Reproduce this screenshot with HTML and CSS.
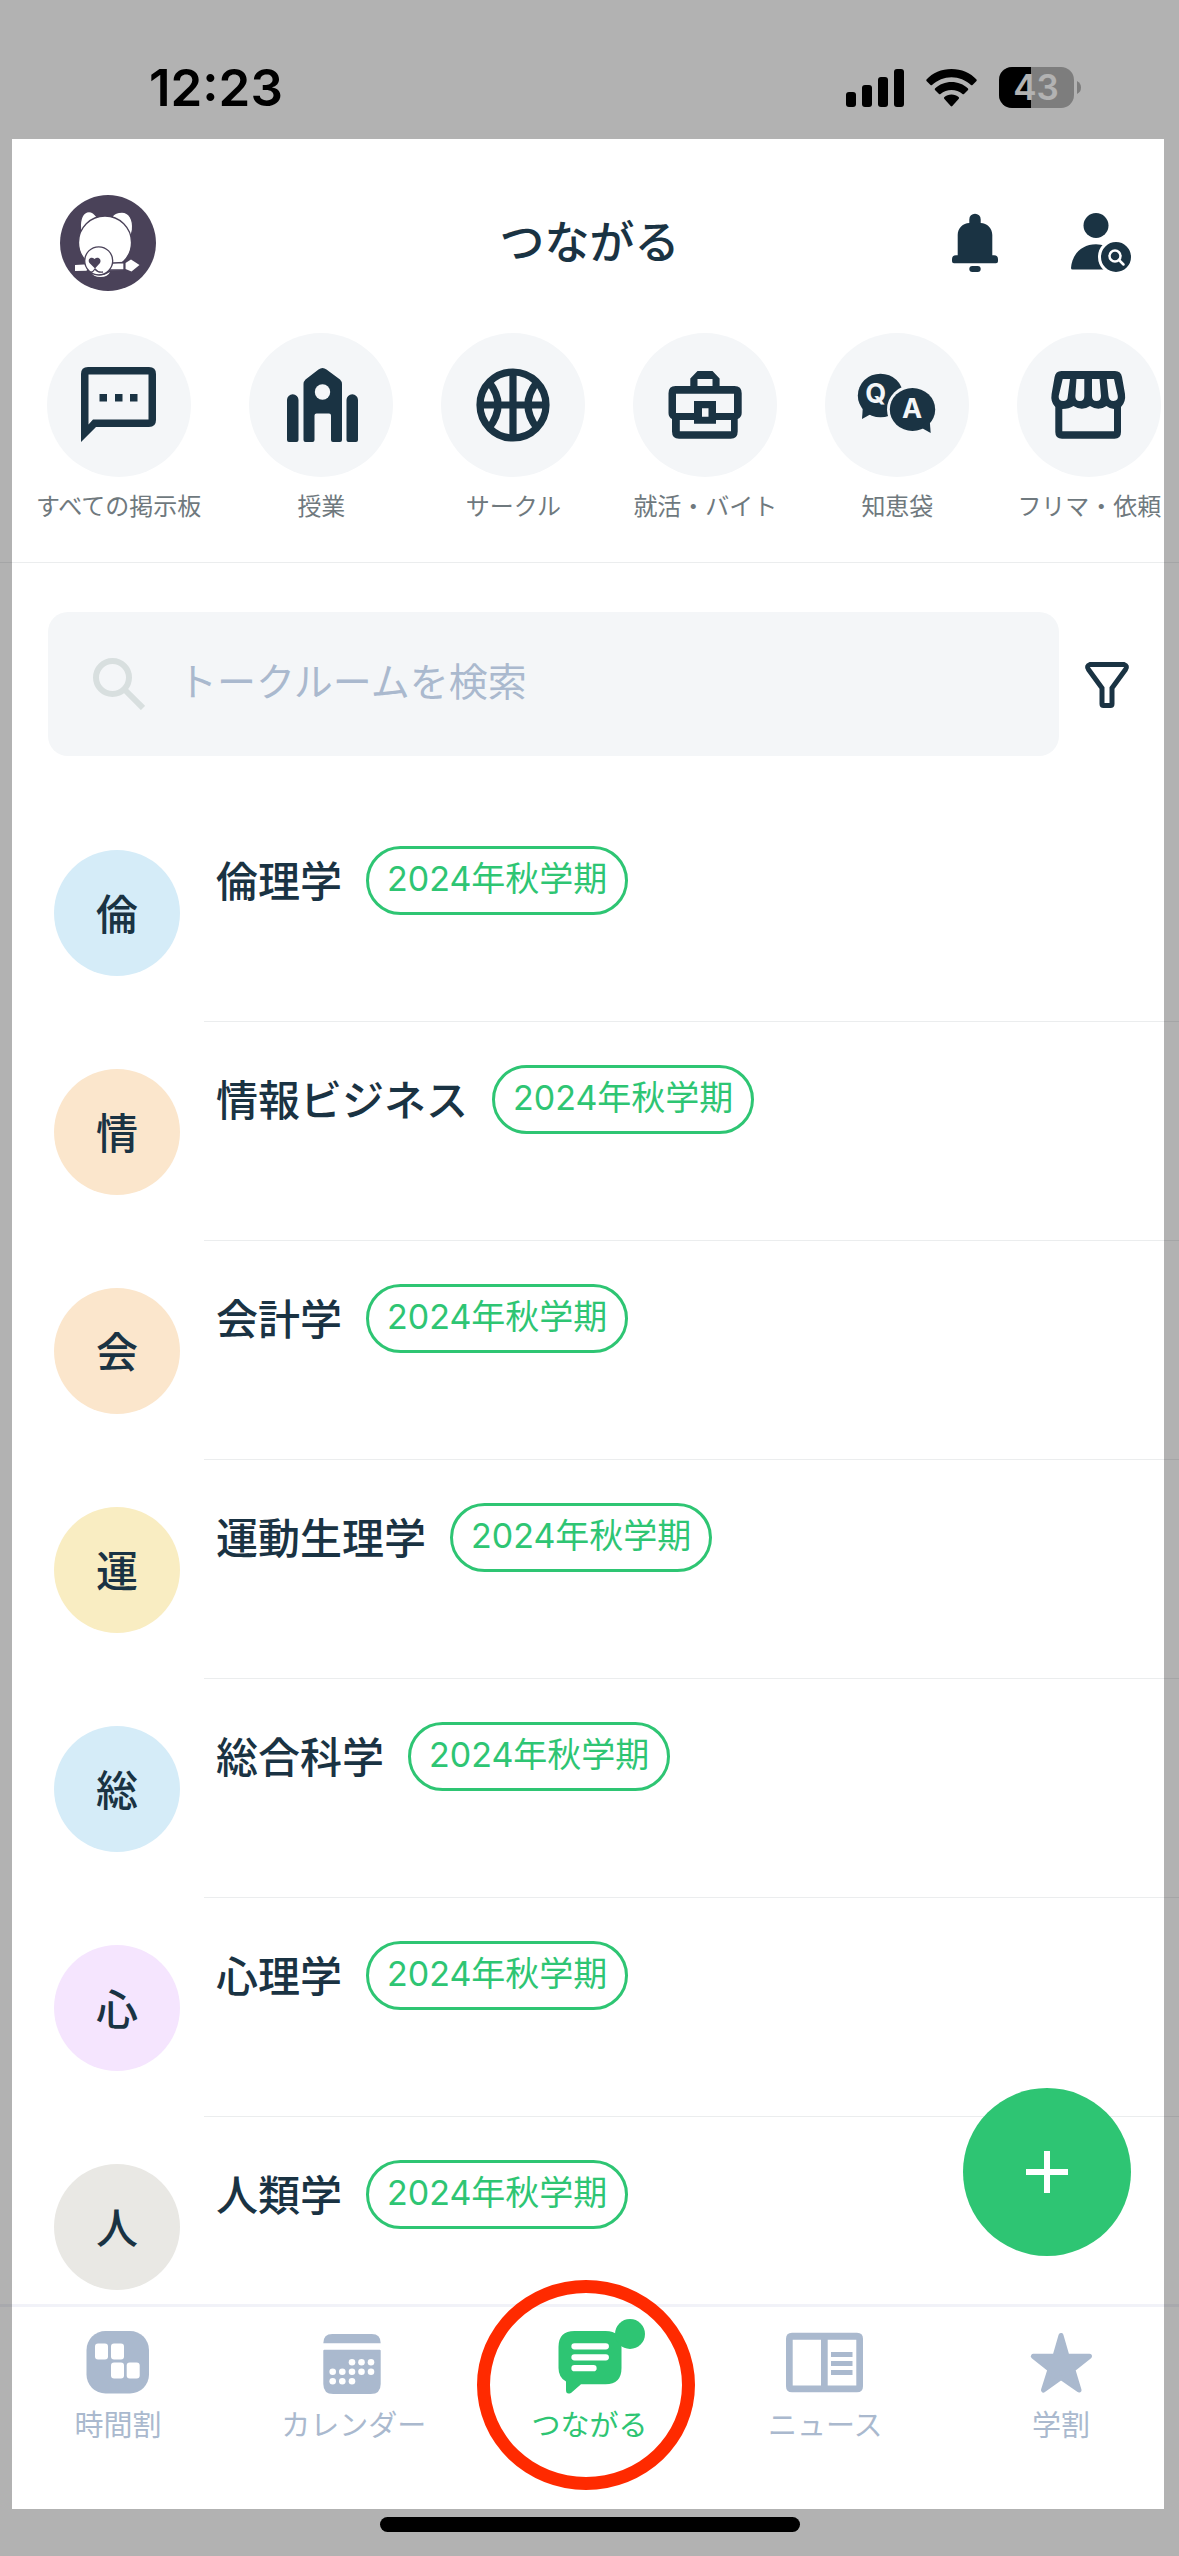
FILE: index.html
```html
<!DOCTYPE html>
<html lang="ja">
  <head>
    <meta charset="utf-8">
    <meta name="viewport" content="width=device-width, initial-scale=1">
    <title>つながる</title>
    <link rel="stylesheet" href="styles.css">
  </head>
  <body>
    <div class="app">
      <div class="status">
        <span class="time">12:23</span>
        <div class="status-icons">
          <svg width="58" height="38" viewBox="0 0 58 38">
            <rect x="0" y="23" width="10" height="15" rx="3"/>
            <rect x="16" y="16" width="10" height="22" rx="3"/>
            <rect x="32" y="8" width="10" height="30" rx="3"/>
            <rect x="48" y="0" width="10" height="38" rx="3"/>
          </svg>
          <svg width="51" height="38" viewBox="0 0 51 38">
            <path d="M25.500 0C35.500 0 44.500 4 50.500 10.500Q51 11.200 50.500 12L46.500 16Q45.700 16.500 45 16C39.500 11 33 8.200 25.500 8.200S11.500 11 6 16Q5.300 16.500 4.500 16L.5 12Q0 11.200.5 10.500C6.500 4 15.500 0 25.500 0z"/>
            <path d="M25.500 13C31.700 13 37.500 15.300 42 19.500Q42.600 20.200 42 21L38 25Q37.200 25.500 36.500 25C33.500 22.500 29.500 21 25.500 21S17.500 22.500 14.500 25Q13.800 25.500 13 25L9 21Q8.400 20.200 9 19.500C13.500 15.300 19.300 13 25.500 13z"/>
            <path d="M25.500 25.500C28.300 25.500 30.800 26.500 32.800 28.200Q33.300 29 32.800 29.800L26.300 37Q25.500 37.800 24.700 37L18.200 29.800Q17.700 29 18.200 28.200C20.200 26.500 22.700 25.500 25.500 25.500z"/>
          </svg>
          <svg width="82" height="41" viewBox="0 0 82 41">
            <clipPath id="level"><rect width="32" height="41"/></clipPath>
            <rect width="75" height="41" rx="13" fill="#b4b4b4"/>
            <rect width="75" height="41" rx="13" clip-path="url(#level)"/>
            <path d="M78 14q4 2 4 6.500t-4 6.500z" fill="#b4b4b4"/>
            <text x="37" y="33" class="battery-text">43</text>
          </svg>
        </div>
      </div>

      <header class="header">
        <button class="icon-button profile" aria-label="プロフィール">
          <svg width="96" height="96" viewBox="0 0 96 96">
            <circle cx="48" cy="48" r="48" fill="#4a4259"/>
            <g fill="#fff" stroke="#4a4259" stroke-width="1.300">
              <path d="M20.500 34C19.500 24 23 16.500 29 16.500c4 0 6 2.500 8 5.500L21 40z"/>
              <path d="M72.500 35C73.500 24 69 17 62 17c-4 0-8 1.500-10 4.500L71 41z"/>
              <ellipse cx="45" cy="47.500" rx="26.500" ry="26.500"/>
              <path d="M15 70L59 67.500 64 68 64.500 75 15 76z" stroke="none"/>
              <path d="M65.500 68L71 64.500 79.500 70 71.500 76.500 65.500 74z" stroke="none"/>
              <path d="M53 68L64 67.500V75H49M64.500 67V76" fill="none"/>
            </g>
            <path d="M26 76.500H64V84H26z" fill="#4a4259"/>
            <path d="M31 77q8 7 19 0q-2 5-9.500 5t-9.500-5z" fill="#fff"/>
            <circle cx="38.700" cy="65.800" r="14" fill="#fff" stroke="#4a4259" stroke-width="1.300"/>
            <path d="M35 73.500L29.500 68C27 64.500 31 61 34.500 64 38 61 42 64.500 40 68z" fill="#4a4259"/>
            <path d="M27 75q4 5 8-1 3 4 8 3" fill="none" stroke="#4a4259" stroke-width="1.300"/>
          </svg>
        </button>
        <h1 class="page-title">つながる</h1>
        <div class="header-actions">
          <button class="icon-button" aria-label="お知らせ">
            <svg width="60" height="66" viewBox="0 0 60 66">
              <path d="M24.300 13V9.400a5.700 5.700 0 0 1 11.400 0V13C42 13 47.300 18 47.300 25V45.300H49a4 4 0 0 1 4 4v2q0 2-2 2H9q-2 0-2-2v-2a4 4 0 0 1 4-4h1.700V25C12.700 18 18 13 24.300 13z"/>
              <rect x="24.300" y="56" width="11.400" height="6" rx="3"/>
            </svg>
          </button>
          <button class="icon-button" aria-label="ユーザー検索">
            <svg width="66" height="66" viewBox="0 0 66 66">
              <circle cx="28" cy="15.500" r="12.500"/>
              <path d="M4.500 59.500Q3 59.500 3 58C4 44 14 34.300 28 34.300q5 0 9 1.500V59.500z"/>
              <circle cx="48" cy="47" r="16.500" stroke="#fff" stroke-width="3"/>
              <circle cx="47" cy="46" r="5.500" fill="none" stroke="#fff" stroke-width="2.500"/>
              <path d="M51 50l4.500 4.500" stroke="#fff" stroke-width="2.500" stroke-linecap="round"/>
            </svg>
          </button>
        </div>
      </header>

      <nav class="categories" aria-label="カテゴリー">
        <a href="#" class="category category-first">
          <svg class="circle" viewBox="0 0 144 144">
            <path fill-rule="evenodd" d="M41 34H102q7 0 7 7V87q0 7-7 7H49L34 109V41q0-7 7-7zM41.500 41.500V91.500L46 86.500H101.500V41.500z"/>
            <path d="M52.500 61H60V68.500H52.500zM68 61H75.500V68.500H68zM83 61H90.500V68.500H83z"/>
          </svg>
          <span>すべての掲示板</span>
        </a>
        <a href="#" class="category">
          <svg class="circle" viewBox="0 0 144 144">
            <path fill-rule="evenodd" d="M38 67a5.700 5.700 0 0 1 11.500 0V107q0 2-2 2H40q-2 0-2-2zM97.500 67a5.700 5.700 0 0 1 11.500 0V107q0 2-2 2H99.500q-2 0-2-2zM54.500 51q0-2.500 2-4.500L69.500 36.500q4-3 8 0L91 46.500q2 2 2 4.500V107q0 2-2 2H84q-2 0-2-2V82.500q0-2-2-2H67.500q-2 0-2 2V107q0 2-2 2H56.500q-2 0-2-2z"/>
            <circle cx="73.500" cy="59" r="7.700" fill="#f4f6f8"/>
          </svg>
          <span>授業</span>
        </a>
        <a href="#" class="category">
          <svg class="circle" viewBox="0 0 144 144">
            <g fill="none" stroke="#1a3343" stroke-width="7.200">
              <circle cx="72" cy="72" r="33"/>
              <path d="M72 39V105M39 72H105M48 49Q66 72 48 95M96 49Q78 72 96 95"/>
            </g>
          </svg>
          <span>サークル</span>
        </a>
        <a href="#" class="category">
          <svg class="circle" viewBox="0 0 144 144">
            <path fill-rule="evenodd" d="M57.300 53V45.500L64.500 38H79.500L86.600 45.500V53H101.500q7.200 0 7.200 7.200V80q0 4-4 6V98.500q0 7.200-7 7.200H46q-7 0-7-7.200V86q-3.500-2-3.500-6V60.200q0-7.200 7-7.200zM64.500 53H79.500V46H64.500zM43 60.700V80H61V68H83V80H101V60.700zM46.800 87V98.300H98V87H83V90.700H61V87zM69 75.300V83.700H75.500V75.300z"/>
          </svg>
          <span>就活・バイト</span>
        </a>
        <a href="#" class="category">
          <svg class="circle" viewBox="0 0 144 144">
            <ellipse cx="55.500" cy="62.500" rx="22.700" ry="21.800"/>
            <path d="M38 72L37 86 46 81z"/>
            <ellipse cx="87.500" cy="76.500" rx="25.500" ry="24.500" fill="#f4f6f8"/>
            <ellipse cx="87.500" cy="76.500" rx="22.700" ry="21.500"/>
            <path d="M104.500 85L105.700 100 95 94z"/>
            <text x="50.700" y="69.500" class="bubble-text">Q</text>
            <text x="87" y="84.500" class="bubble-text">A</text>
          </svg>
          <span>知恵袋</span>
        </a>
        <a href="#" class="category">
          <svg class="circle" viewBox="0 0 144 144">
            <path fill-rule="evenodd" d="M44.500 38H98q6 0 7 6l3 17q1 8-4 13V99q0 6.700-6.500 6.700H45q-6.700 0-6.700-6.700V74q-5-5-3.700-13l3-17q1-6 6.900-6zM45.300 76V98.300H97V76q-4 0-7.500-3-8 5.500-16.500 0-8 5.500-16.500 0-4.500 3-11.200 3zM45.700 46L41.700 63q-.5 5 4.500 5 4.300 0 4.500-4L53 46zM59.500 46L58.300 63q0 5 4.500 5t4.500-5V46zM75 46V63q0 5 4.500 5t4.500-5L82.500 46zM89.700 46L91.500 63q.5 5 5 5 5-.5 4.300-5L97 46z"/>
          </svg>
          <span>フリマ・依頼</span>
        </a>
      </nav>

      <main class="main">
        <form class="search">
          <label class="search-box">
            <svg width="52" height="52" viewBox="0 0 52 52" fill="none" stroke="#d8dfdf" stroke-width="6">
              <circle cx="19.500" cy="19.500" r="16.500"/>
              <path d="M31 31L50 50"/>
            </svg>
            <input type="search" placeholder="トークルームを検索" aria-label="トークルームを検索">
          </label>
          <button type="button" class="icon-button" aria-label="絞り込み">
            <svg width="50" height="54" viewBox="0 0 50 54">
              <path d="M8 7.500H42Q46 9 43.500 12.500L30 31V47q0 1.500-1.500 1.500h-7q-1.500 0-1.500-1.500V31L6.500 12.500Q4 9 8 7.500z" fill="none" stroke="#1a3343" stroke-width="5"/>
            </svg>
          </button>
        </form>

        <ul class="rooms">
          <li class="room">
            <span class="room-icon blue">倫</span>
            <div class="room-body"><h2>倫理学</h2><span class="term">2024年秋学期</span></div>
          </li>
          <li class="room">
            <span class="room-icon orange">情</span>
            <div class="room-body"><h2>情報ビジネス</h2><span class="term">2024年秋学期</span></div>
          </li>
          <li class="room">
            <span class="room-icon orange">会</span>
            <div class="room-body"><h2>会計学</h2><span class="term">2024年秋学期</span></div>
          </li>
          <li class="room">
            <span class="room-icon yellow">運</span>
            <div class="room-body"><h2>運動生理学</h2><span class="term">2024年秋学期</span></div>
          </li>
          <li class="room">
            <span class="room-icon blue">総</span>
            <div class="room-body"><h2>総合科学</h2><span class="term">2024年秋学期</span></div>
          </li>
          <li class="room">
            <span class="room-icon purple">心</span>
            <div class="room-body"><h2>心理学</h2><span class="term">2024年秋学期</span></div>
          </li>
          <li class="room">
            <span class="room-icon gray">人</span>
            <div class="room-body"><h2>人類学</h2><span class="term">2024年秋学期</span></div>
          </li>
        </ul>

        <button class="add" aria-label="トークルームを追加">
          <svg width="42" height="42" viewBox="0 0 42 42"><path d="M21 0V42M0 21H42" stroke="#fff" stroke-width="6"/></svg>
        </button>
      </main>

      <nav class="tabs" aria-label="メニュー">
        <a href="#" class="tab">
          <svg width="112" height="80" viewBox="-6 0 112 80">
            <rect x="18.500" y="14" width="62.500" height="62.500" rx="19"/>
            <g fill="#fff">
              <rect x="27" y="26.500" width="13" height="16" rx="3"/>
              <rect x="43" y="26.500" width="13" height="16" rx="3"/>
              <rect x="43" y="45.500" width="13" height="16" rx="3"/>
              <rect x="58.700" y="45.500" width="13" height="16" rx="3"/>
            </g>
          </svg>
          <span>時間割</span>
        </a>
        <a href="#" class="tab">
          <svg width="112" height="80" viewBox="-6 0 112 80">
            <path d="M19.300 26.300q0-9.300 9-9.300H67.700q9 0 9 9.300zM20.300 32.700H75.700q1 0 1 1V67q0 10-10 10H29.300q-10 0-10-10V33.700q0-1 1-1z"/>
            <g fill="#fff">
              <circle cx="48" cy="45.300" r="3.300"/><circle cx="57.500" cy="45.300" r="3.300"/><circle cx="67" cy="45.300" r="3.300"/>
              <circle cx="28.700" cy="54.800" r="3.300"/><circle cx="38.300" cy="54.800" r="3.300"/><circle cx="48" cy="54.800" r="3.300"/><circle cx="57.500" cy="54.800" r="3.300"/><circle cx="67" cy="54.800" r="3.300"/>
              <circle cx="28.700" cy="64.300" r="3.300"/><circle cx="38.300" cy="64.300" r="3.300"/><circle cx="48" cy="64.300" r="3.300"/>
            </g>
          </svg>
          <span>カレンダー</span>
        </a>
        <a href="#" class="tab active">
          <svg width="112" height="80" viewBox="-7 0 112 80">
            <path d="M34.500 14H65.500q16 0 16 16V51q0 16.300-16 16.300H41L31 76q-5 2-5-3V64.500q-7.500-4-7.500-13.500V30q0-16 16-16z"/>
            <circle cx="90" cy="17" r="15"/>
            <path d="M34.500 29.300H65.800M34.500 40.300H65.800M34.500 51.200H53.500" stroke="#fff" stroke-width="6.300" stroke-linecap="round"/>
          </svg>
          <span>つながる</span>
          <i class="ring"></i>
        </a>
        <a href="#" class="tab">
          <svg width="112" height="80" viewBox="-6 0 112 80">
            <path fill-rule="evenodd" d="M17 15.700H82q6 0 6 6V69.300q0 6-6 6H17q-6 0-6-6V21.700q0-6 6-6zM17.700 22.700V68.500H46V22.700zM52.700 22.700V68.500H81.300V22.700z"/>
            <path d="M56 35H77.500V40H56zM56 44H77.500V49H56zM56 53H77.500V58H56z"/>
          </svg>
          <span>ニュース</span>
        </a>
        <a href="#" class="tab">
          <svg width="112" height="80" viewBox="-6 0 112 80">
            <path d="M50 18.500L56 39.200H78.500L61.800 52.500 68 73 50 60.500 32.500 73 39 52.500 22.300 39.200H44z" stroke="#aab9ce" stroke-width="5" stroke-linejoin="round"/>
          </svg>
          <span>学割</span>
        </a>
      </nav>
      <div class="home-bar"></div>

      <!-- dims everything outside the app area -->
      <div class="dim"></div>
    </div>
  </body>
</html>
```
FILE: styles.css
```css
* {
  box-sizing: border-box;
}
body {
  margin: 0;
  background: #fff;
  color: #1a3343;
  font-family: "Noto Sans CJK JP", sans-serif;
}
h1, h2 {
  margin: 0;
  font-weight: 500;
}
a {
  color: inherit;
  text-decoration: none;
}
svg {
  display: block;
  flex-shrink: 0;
}
.app {
  position: relative;
  display: flex;
  flex-direction: column;
  height: 100vh;
  overflow: hidden;
}
.icon-button {
  padding: 0;
  border: none;
  background: none;
}
.icon-button svg {
  fill: #1a3343;
}

/* status bar */
.status {
  display: flex;
  align-items: center;
  justify-content: space-between;
  height: 139px;
  padding: 36px 98px 0 149px;
  color: #000;
}
.time {
  font-family: Inter, sans-serif;
  font-size: 51px;
  font-weight: 600;
}
.status-icons {
  display: flex;
  align-items: center;
  gap: 22px;
}
.battery-text {
  fill: #fff;
  font-family: Inter, sans-serif;
  font-size: 35px;
  font-weight: 600;
  text-anchor: middle;
}

/* header */
.header {
  display: grid;
  grid-template-columns: 1fr auto 1fr;
  align-items: center;
  padding: 56px 45px 42px;
}
.profile {
  justify-self: start;
  margin-left: 15px;
}
.page-title {
  padding-bottom: 6px;
  font-size: 45px;
  line-height: 60px;
}
.header-actions {
  display: flex;
  justify-content: flex-end;
  gap: 63px;
}

/* categories */
.categories {
  display: flex;
  flex-shrink: 0;
  gap: 48px;
  padding: 0 0 41px 36px;
  border-bottom: 1px solid #ebedee;
  overflow: hidden;
}
.category {
  display: flex;
  flex: 0 0 144px;
  flex-direction: column;
  align-items: center;
  gap: 12px;
  color: #6f797e;
  font-size: 24px;
  line-height: 32px;
  white-space: nowrap;
}
.category-first {
  flex-basis: 164px;
}
.circle {
  width: 144px;
  height: 144px;
  border-radius: 50%;
  background: #f4f6f8;
  fill: #1a3343;
}
.bubble-text {
  fill: #f4f6f8;
  font-family: Inter, sans-serif;
  font-size: 27px;
  font-weight: 700;
  text-anchor: middle;
}

/* search */
.main {
  position: relative;
  flex: 1;
  min-height: 0;
  overflow: hidden;
}
.search {
  display: flex;
  align-items: center;
  gap: 23px;
  padding: 49px 47px 47px 48px;
}
.search-box {
  display: flex;
  flex: 1;
  align-items: center;
  gap: 33px;
  height: 144px;
  padding: 0 45px;
  border-radius: 20px;
  background: #f4f6f8;
}
.search-box input {
  flex: 1;
  padding: 0 0 10px;
  border: none;
  outline: none;
  background: none;
  color: #1a3343;
  font-family: inherit;
  font-size: 39px;
  line-height: 60px;
}
.search-box input::placeholder {
  color: #aab9ce;
}

/* talk rooms */
.rooms {
  margin: 0;
  padding: 0 0 0 54px;
  list-style: none;
}
.room {
  display: flex;
  align-items: center;
  gap: 24px;
  height: 219px;
}
.room-icon {
  display: flex;
  flex: 0 0 126px;
  align-items: center;
  justify-content: center;
  height: 126px;
  padding-bottom: 3px;
  border-radius: 50%;
  font-size: 42px;
  font-weight: 500;
}
.blue {
  background: #d5ecf8;
}
.orange {
  background: #fbe6cc;
}
.yellow {
  background: #f9edc2;
}
.purple {
  background: #f5e5fe;
}
.gray {
  background: #e9e8e4;
}
.room-body {
  display: flex;
  flex: 1;
  align-items: flex-start;
  gap: 24px;
  height: 100%;
  padding: 43px 0 0 12px;
  border-bottom: 1px solid #ebedee;
}
.room-body h2 {
  font-size: 42px;
  line-height: 66px;
}
.term {
  height: 69px;
  padding: 0 18px;
  border: 3px solid #2ec573;
  border-radius: 35px;
  color: #2ec573;
  font-family: Inter, "Noto Sans CJK JP", sans-serif;
  font-size: 34px;
  line-height: 60px;
}
.add {
  position: absolute;
  right: 48px;
  bottom: 48px;
  display: flex;
  align-items: center;
  justify-content: center;
  width: 168px;
  height: 168px;
  border: none;
  border-radius: 50%;
  background: #2ec573;
}

/* bottom tabs */
.tabs {
  display: grid;
  grid-template-columns: repeat(5, 1fr);
  border-top: 3px solid #f1f2f8;
  padding: 10px 0 76px;
}
.tab {
  position: relative;
  display: flex;
  flex-direction: column;
  align-items: center;
  gap: 8px;
  color: #aab9ce;
  fill: #aab9ce;
  font-size: 29px;
  line-height: 36px;
}
.active {
  color: #2ec573;
  fill: #2ec573;
}
.ring {
  position: absolute;
  top: -37px;
  left: calc(50% - 112px);
  width: 218px;
  height: 210px;
  border: 13px solid #ff2a00;
  border-radius: 50%;
}
.home-bar {
  align-self: center;
  width: 420px;
  height: 15px;
  margin-bottom: 24px;
  border-radius: 8px;
  background: #000;
}
.dim {
  position: absolute;
  inset: 0;
  border: solid rgba(0, 0, 0, 0.3);
  border-width: 139px 15px 47px 12px;
  pointer-events: none;
}
```
